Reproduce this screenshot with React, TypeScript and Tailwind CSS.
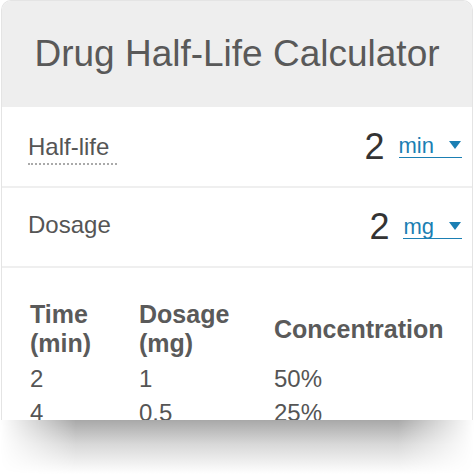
const rows = [
  { time: "2", dose: "1", conc: "50%" },
  { time: "4", dose: "0.5", conc: "25%" },
  { time: "6", dose: "0.25", conc: "12.5%" },
];

const UnitSelect: React.FC<{ unit: string }> = ({ unit }) => {
  return (
    <span className="flex items-center gap-[15px] border-b-[1.5px] border-[#1b7fb3] leading-[22px] text-[22px] text-[#1b7fb3]">
      {unit}
      <svg width="12" height="8" viewBox="0 0 12 8" className="mb-[2px] mr-[1px]">
        <path d="M0 0h12L6 8z" fill="#1b7fb3" />
      </svg>
    </span>
  );
};

const App: React.FC = () => {
  return (
    <div className="w-[474px] h-[474px] bg-white overflow-hidden font-['Liberation_Sans',Arial,sans-serif]">
      <div className="mx-[1px] h-[420px] overflow-hidden rounded-t-[10px] border-x border-t border-[#e4e4e4] bg-white">
        <div className="h-[106px] bg-[#eeeeee] flex items-center justify-center">
          <h1 className="text-[37px] text-[#595959]">Drug Half-Life Calculator</h1>
        </div>

        <div className="h-[81px] border-b-2 border-[#efefef] flex items-center justify-between pl-[26px] pr-[10px]">
          <span className="text-[24px] leading-[28px] text-[#555] border-b-2 border-dotted border-[#aaa] pr-[8px] mt-[4px] pb-[2px]">
            Half-life
          </span>
          <div className="flex items-center gap-[14px]">
            <span className="text-[36px] text-[#333]">2</span>
            <UnitSelect unit="min" />
          </div>
        </div>

        <div className="h-[80px] border-b-2 border-[#efefef] flex items-center justify-between pl-[26px] pr-[10px]">
          <span className="text-[24px] text-[#555] -mt-[4px]">Dosage</span>
          <div className="flex items-center gap-[14px]">
            <span className="text-[36px] text-[#333]">2</span>
            <UnitSelect unit="mg" />
          </div>
        </div>

        <div className="pt-[32px] pl-[28px] text-[#555]">
          <div className="grid grid-cols-[109px_135px_1fr] items-center text-[25px] leading-[29px] font-bold text-[#5a5a5a]">
            <span>Time<br />(min)</span>
            <span>Dosage<br />(mg)</span>
            <span>Concentration</span>
          </div>
          <div className="mt-[4px]">
            {rows.map((r) => (
              <div key={r.time} className="grid grid-cols-[109px_135px_1fr] text-[24px] leading-[34px]">
                <span>{r.time}</span>
                <span>{r.dose}</span>
                <span>{r.conc}</span>
              </div>
            ))}
          </div>
        </div>
      </div>

      <div className="h-[54px] bg-[linear-gradient(to_bottom,#a8a8a8,#d8d8d8_45%,#ffffff)] [mask-image:linear-gradient(to_right,transparent,black_16%,black_84%,transparent)]" />
    </div>
  );
};

export default App;
